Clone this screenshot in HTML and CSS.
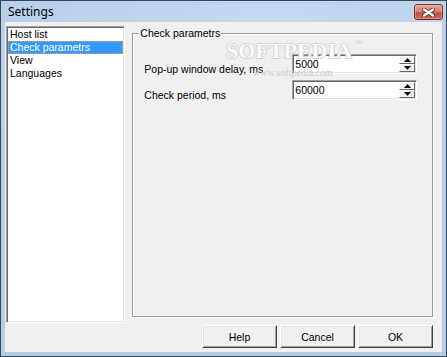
FILE: index.html
```html
<!DOCTYPE html>
<html>
<head>
<meta charset="utf-8">
<link rel="stylesheet" href="styles.css">
</head>
<body>
<div class="window">
  <div class="titlebar">
    <span class="title">Settings</span>
    <span class="close">
      <svg width="15" height="9" viewBox="0 0 15 9">
        <path d="M3 1.5 L12 7.5 M12 1.5 L3 7.5" stroke="#5a2a26" stroke-width="4" stroke-linecap="round"/>
        <path d="M3 1.5 L12 7.5 M12 1.5 L3 7.5" stroke="#ffffff" stroke-width="2.4" stroke-linecap="round"/>
      </svg>
    </span>
  </div>
  <div class="client">
    <div class="main">
      <div class="listbox">
        <div class="item">Host list</div>
        <div class="item selected">Check parametrs</div>
        <div class="item">View</div>
        <div class="item">Languages</div>
      </div>
      <div class="group">
        <span class="legend">Check parametrs</span>
        <div class="fields">
          <label class="label">Pop-up window delay, ms</label>
          <div class="edit">
            <span class="value">5000</span>
            <span class="spin">
              <span class="half"><svg width="7" height="4" viewBox="0 0 7 4"><path d="M3.5 0 L7 4 L0 4 Z" fill="#000"/></svg></span>
              <span class="half"><svg width="7" height="4" viewBox="0 0 7 4"><path d="M0 0 L7 0 L3.5 4 Z" fill="#000"/></svg></span>
            </span>
          </div>
          <label class="label">Check period, ms</label>
          <div class="edit">
            <span class="value">60000</span>
            <span class="spin">
              <span class="half"><svg width="7" height="4" viewBox="0 0 7 4"><path d="M3.5 0 L7 4 L0 4 Z" fill="#000"/></svg></span>
              <span class="half"><svg width="7" height="4" viewBox="0 0 7 4"><path d="M0 0 L7 0 L3.5 4 Z" fill="#000"/></svg></span>
            </span>
          </div>
        </div>
      </div>
    </div>
    <div class="buttons">
      <button class="btn">Help</button>
      <button class="btn">Cancel</button>
      <button class="btn">OK</button>
    </div>
    <div class="watermark">SOFTPEDIA<span class="tm">™</span></div>
    <div class="watermark-url">www.softpedia.com</div>
  </div>
</div>
</body>
</html>
```
FILE: styles.css
```css
html, body {
  margin: 0;
  padding: 0;
  background: #bcd3ec;
}
.window {
  width: 447px;
  height: 357px;
  box-sizing: border-box;
  border: 1px solid #37475a;
  background: linear-gradient(to bottom, #c0d6ef 0px, #b9d1ea 30px, #b6cfe9 100%);
  display: flex;
  flex-direction: column;
}
.titlebar {
  height: 21px;
  display: flex;
  align-items: center;
  padding: 0 3px 0 7px;
  background: linear-gradient(to right, #b7cfe9, #c4d9f0 60%, #bcd3ec);
}
.title {
  font-family: "Noto Sans", "Open Sans", sans-serif;
  font-size: 12px;
  color: #000;
  flex: 1;
  line-height: 16px;
  margin-top: 1px;
}
.close {
  width: 27px;
  height: 14px;
  border: 1px solid #7b2f28;
  border-radius: 3px;
  background: linear-gradient(to bottom, #e6a598 0%, #d58474 45%, #c1513f 55%, #cb6b55 100%);
  display: flex;
  align-items: center;
  justify-content: center;
  margin-top: 1px;
  box-shadow: inset 0 0 0 1px rgba(255,255,255,0.25);
}
.close svg { display: block; }
.client {
  position: relative;
  flex: 1;
  margin: 0 4px 4px 4px;
  background: #f0f0f0;
  padding: 4px 9px 0 1px;
  font-family: "Liberation Sans", Arial, sans-serif;
  font-size: 10.5px;
  color: #000;
}
.main {
  display: flex;
  align-items: flex-start;
}
.listbox {
  width: 121px;
  height: 297px;
  box-sizing: border-box;
  background: #fff;
  border: 1px solid;
  border-color: #a0a0a0 #ffffff #ffffff #a0a0a0;
  box-shadow: inset 1px 1px 0 #696969, inset -1px -1px 0 #e3e3e3;
  padding: 1px;
}
.item {
  height: 13px;
  line-height: 13px;
  padding-left: 2px;
  white-space: nowrap;
}
.item.selected {
  background: #3399ff;
  color: #fff;
  outline: 1px dotted #ff9a4a;
  outline-offset: -1px;
}
.group {
  margin-left: 7px;
  margin-top: 7px;
  width: 305px;
  height: 284px;
  box-sizing: border-box;
  border: 1px solid #a0a0a0;
  box-shadow: inset 1px 1px 0 #fff, 1px 1px 0 #fff;
}
.legend {
  display: inline-block;
  margin-top: -7px;
  margin-left: 6px;
  padding: 0 1px;
  background: #f0f0f0;
  line-height: 13px;
  vertical-align: top;
}
.fields {
  display: grid;
  grid-template-columns: 148px 125px;
  row-gap: 4px;
  padding-left: 11px;
  margin-top: 8px;
}
.label {
  padding-top: 9px;
  line-height: 13px;
  white-space: nowrap;
}
.edit {
  height: 20px;
  box-sizing: border-box;
  background: #fff;
  border: 1px solid;
  border-color: #a0a0a0 #ffffff #ffffff #a0a0a0;
  box-shadow: inset 1px 1px 0 #696969, inset -1px -1px 0 #e3e3e3;
  padding: 1px;
  display: flex;
  align-items: center;
}
.value {
  flex: 1;
  padding-left: 1px;
  line-height: 12px;
}
.spin {
  width: 16px;
  height: 16px;
  display: flex;
  flex-direction: column;
}
.half {
  flex: 1;
  box-sizing: border-box;
  background: #f0f0f0;
  border: 1px solid;
  border-color: #ffffff #696969 #696969 #ffffff;
  display: flex;
  align-items: center;
  justify-content: center;
}
.half svg { display: block; }
.buttons {
  display: flex;
  justify-content: flex-end;
  gap: 3px;
  margin-top: 2px;
}
.btn {
  width: 75px;
  height: 23px;
  box-sizing: border-box;
  margin: 0;
  padding: 0;
  font-family: "Liberation Sans", Arial, sans-serif;
  font-size: 10.5px;
  color: #000;
  background: #f0f0f0;
  border: 1px solid;
  border-color: #ffffff #404040 #404040 #ffffff;
  box-shadow: inset 1px 1px 0 #e3e3e3, inset -1px -1px 0 #a0a0a0;
  border-radius: 0;
}
.watermark {
  position: absolute;
  left: 221px;
  top: 17px;
  font-family: "Liberation Serif", serif;
  font-weight: bold;
  font-size: 22px;
  line-height: 23px;
  color: #fbfbfb;
  text-shadow: 1px 0 0 #d2d2d2, -1px 0 0 #d2d2d2, 0 1px 0 #d2d2d2, 0 -1px 0 #d8d8d8;
  pointer-events: none;
}
.tm {
  font-size: 8px;
  vertical-align: top;
  font-family: "Liberation Sans", sans-serif;
  font-weight: normal;
  color: #cfcfcf;
  text-shadow: none;
  margin-left: 3px;
  line-height: 10px;
}
.watermark-url {
  position: absolute;
  left: 248px;
  top: 47px;
  font-family: "Liberation Serif", serif;
  font-size: 10px;
  line-height: 8px;
  color: #cbcbcb;
  pointer-events: none;
}
```
